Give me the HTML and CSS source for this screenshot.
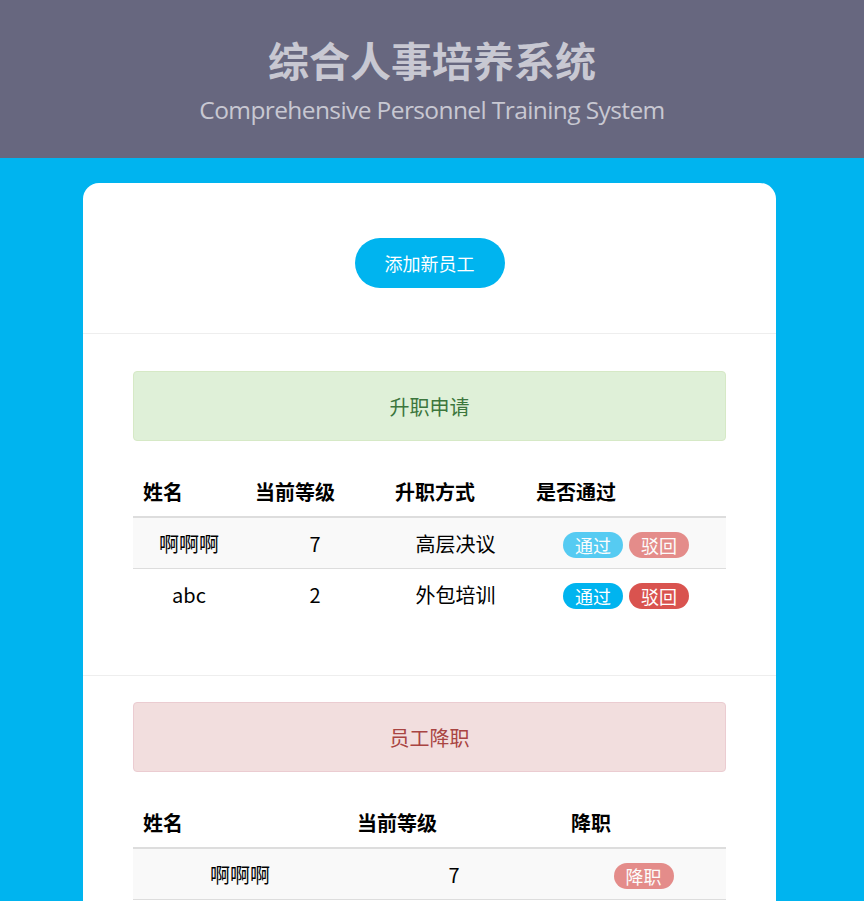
FILE: index.html
```html
<!DOCTYPE html>
<html lang="zh-CN">
<head>
<meta charset="utf-8">
<title>综合人事培养系统</title>
<link rel="stylesheet" href="styles.css">
</head>
<body>
<header class="top">
  <h1 class="title">综合人事培养系统</h1>
  <p class="subtitle">Comprehensive Personnel Training System</p>
</header>
<main class="card">
  <section class="add-section">
    <button class="btn-add">添加新员工</button>
  </section>
  <section class="panel panel-promote">
    <div class="alert alert-success">升职申请</div>
    <table class="tbl tbl-promote">
      <thead>
        <tr><th class="c1">姓名</th><th class="c2">当前等级</th><th class="c3">升职方式</th><th class="c4">是否通过</th></tr>
      </thead>
      <tbody>
        <tr class="striped"><td>啊啊啊</td><td>7</td><td>高层决议</td><td><span class="pill pill-blue faded">通过</span><span class="pill pill-red faded">驳回</span></td></tr>
        <tr><td>abc</td><td>2</td><td>外包培训</td><td><span class="pill pill-blue">通过</span><span class="pill pill-red">驳回</span></td></tr>
      </tbody>
    </table>
  </section>
  <section class="panel panel-demote">
    <div class="alert alert-danger">员工降职</div>
    <table class="tbl tbl-demote">
      <thead>
        <tr><th class="d1">姓名</th><th class="d2">当前等级</th><th class="d3">降职</th></tr>
      </thead>
      <tbody>
        <tr class="striped"><td>啊啊啊</td><td>7</td><td><span class="pill pill-red faded">降职</span></td></tr>
      </tbody>
    </table>
  </section>
</main>
</body>
</html>
```
FILE: styles.css
```css
html, body {
  margin: 0;
  padding: 0;
}
body {
  background: #00b4ef;
  font-family: "Noto Sans", "Noto Sans CJK SC", sans-serif;
  color: #000;
  height: 901px;
  overflow: hidden;
}
.top {
  background: #67677f;
  height: 158px;
  text-align: center;
  box-sizing: border-box;
  padding-top: 29px;
}
.title {
  margin: 0;
  font-family: "Noto Sans CJK SC", sans-serif;
  font-size: 41px;
  font-weight: 700;
  line-height: 60px;
  color: #c8c8d2;
}
.subtitle {
  margin: 0;
  font-family: "Open Sans", "Noto Sans", sans-serif;
  font-size: 24.5px;
  line-height: 42px;
  color: #c8c8d2;
  letter-spacing: -0.6px;
}
.card {
  width: 693px;
  margin: 25px 0 0 83px;
  background: #fff;
  border-radius: 16px 16px 0 0;
  min-height: 800px;
}
.add-section {
  display: flex;
  justify-content: center;
  padding: 55px 0 45px;
  border-bottom: 1px solid #eeeeee;
}
.btn-add {
  width: 150px;
  height: 50px;
  border: none;
  border-radius: 25px;
  background: #00b4ef;
  color: #fff;
  font-family: "Noto Sans CJK SC", sans-serif;
  font-size: 18px;
  padding: 0;
}
.panel {
  padding: 37px 50px 0;
}
.panel-promote {
  padding-bottom: 56px;
  border-bottom: 1px solid #eeeeee;
}
.panel-demote {
  padding-top: 26px;
}
.alert {
  height: 70px;
  box-sizing: border-box;
  border: 1px solid transparent;
  border-radius: 4px;
  display: flex;
  align-items: center;
  justify-content: center;
  font-family: "Noto Sans CJK SC", sans-serif;
  font-size: 20px;
}
.alert-success {
  background: #dff0d8;
  border-color: #d6e9c6;
  color: #3c763d;
}
.alert-danger {
  background: #f2dede;
  border-color: #ebccd1;
  color: #a94442;
}
.tbl {
  width: 100%;
  border-collapse: collapse;
  margin-top: 30px;
  table-layout: fixed;
  font-family: "Noto Sans CJK SC", sans-serif;
}
.tbl th {
  box-sizing: border-box;
  text-align: left;
  font-size: 20px;
  font-weight: 700;
  padding: 0 10px 4px;
  height: 46px;
  vertical-align: middle;
  border-bottom: 2px solid #dddddd;
}
.tbl td {
  text-align: center;
  font-size: 20px;
  height: 50px;
  padding: 0 10px;
  vertical-align: middle;
  border-top: 1px solid #dddddd;
}
.tbl thead + tbody tr:first-child td {
  border-top: none;
}
.tbl-demote td {
  border-bottom: 1px solid #dddddd;
}
.tbl tr.striped td {
  background: #f9f9f9;
}
.c1 { width: 112px; }
.c2 { width: 140px; }
.c3 { width: 141px; }
.c4 { width: 200px; }
.d1 { width: 214px; }
.d2 { width: 214px; }
.d3 { width: 165px; }
.pill {
  display: inline-block;
  width: 60px;
  height: 26px;
  line-height: 26px;
  border-radius: 13px;
  color: #fff;
  font-size: 18px;
  text-align: center;
  vertical-align: middle;
  margin: 0 3px;
}
.pill-blue { background: #00b4ef; }
.pill-red { background: #d9534f; }
.faded { opacity: 0.65; }
```
